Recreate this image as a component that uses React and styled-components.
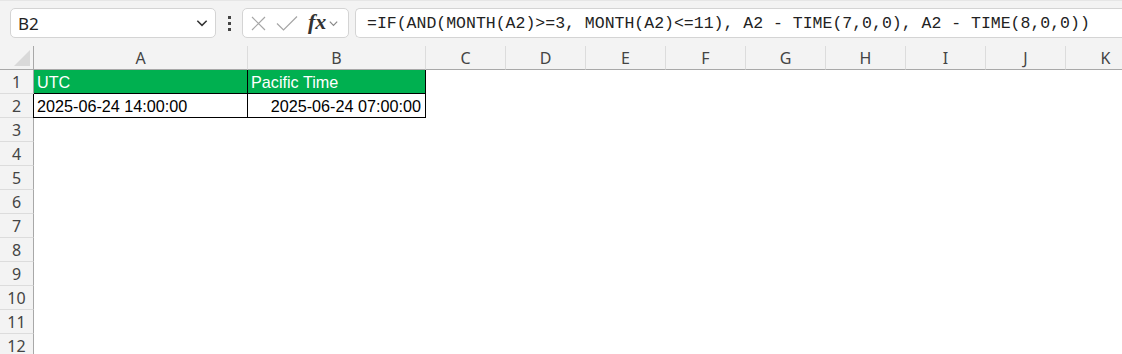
import styled, { createGlobalStyle } from 'styled-components';

const GlobalStyle = createGlobalStyle`
  html, body {
    margin: 0;
    padding: 0;
    background: #f3f3f3;
    overflow: hidden;
  }
`;

const columns = [
  { id: 'A', width: 214 },
  { id: 'B', width: 178 },
  { id: 'C', width: 80 },
  { id: 'D', width: 80 },
  { id: 'E', width: 80 },
  { id: 'F', width: 80 },
  { id: 'G', width: 80 },
  { id: 'H', width: 80 },
  { id: 'I', width: 80 },
  { id: 'J', width: 80 },
  { id: 'K', width: 80 },
];

const rows = [1, 2, 3, 4, 5, 6, 7, 8, 9, 10, 11, 12];

const cells = {
  A1: { text: 'UTC', header: true },
  B1: { text: 'Pacific Time', header: true },
  A2: { text: '2025-06-24 14:00:00', boxed: true },
  B2: { text: '2025-06-24 07:00:00', boxed: true, right: true },
};

const Chevron = ({ size = 12, color = '#444' }) => (
  <svg width={size} height={size} viewBox="0 0 12 12">
    <path d="M2 4 L6 8 L10 4" fill="none" stroke={color} strokeWidth="1.3" />
  </svg>
);

function App() {
  const template = `34px ${columns.map((c) => `${c.width}px`).join(' ')}`;
  return (
    <>
      <GlobalStyle />
      <ScPage>
        <ScToolbar>
          <ScNameBox>
            <span>B2</span>
            <Chevron size={14} color="#333" />
          </ScNameBox>
          <ScDots>
            <i />
            <i />
            <i />
          </ScDots>
          <ScButtonGroup>
            <svg width="17" height="17" viewBox="0 0 17 17">
              <path d="M2 2 L15 15 M15 2 L2 15" stroke="#a6a6a6" strokeWidth="1.2" />
            </svg>
            <svg width="22" height="17" viewBox="0 0 22 17">
              <path d="M1 8.5 L7.5 15 L21 1.5" fill="none" stroke="#a6a6a6" strokeWidth="1.2" />
            </svg>
            <ScFx>
              fx
              <Chevron size={11} color="#888" />
            </ScFx>
          </ScButtonGroup>
          <ScFormula>=IF(AND(MONTH(A2)&gt;=3, MONTH(A2)&lt;=11), A2 - TIME(7,0,0), A2 - TIME(8,0,0))</ScFormula>
        </ScToolbar>

        <ScGrid style={{ gridTemplateColumns: template }}>
          <ScCorner>
            <svg width="18" height="18" viewBox="0 0 18 18">
              <path d="M17 1 L17 17 L1 17 Z" fill="#d9d9d9" />
            </svg>
          </ScCorner>
          {columns.map((c) => (
            <ScColHeader key={c.id}>{c.id}</ScColHeader>
          ))}
          {rows.map((r) => (
            <ScRow key={r}>
              <ScRowHeader>{r}</ScRowHeader>
              {columns.map((c) => {
                const cell = cells[`${c.id}${r}`];
                return (
                  <ScCell
                    key={c.id}
                    $header={cell?.header}
                    $boxed={cell?.boxed}
                    $right={cell?.right}
                    $first={c.id === 'A'}
                  >
                    {cell?.text}
                  </ScCell>
                );
              })}
            </ScRow>
          ))}
        </ScGrid>
      </ScPage>
    </>
  );
}

const ScPage = styled.div`
  width: 1122px;
  height: 354px;
  overflow: hidden;
  background: #f3f3f3;
`;

const ScToolbar = styled.div`
  height: 46px;
  box-sizing: border-box;
  padding: 7px 0 0 10px;
  display: flex;
  align-items: flex-start;
  border-top: 1px solid #e6e6e6;
`;

const ScBox = styled.div`
  height: 30px;
  box-sizing: border-box;
  background: #fff;
  border: 1px solid #d4d4d4;
  border-radius: 5px;
  display: flex;
  align-items: center;
`;

const ScNameBox = styled(ScBox)`
  width: 206px;
  padding: 0 6px 0 7px;
  justify-content: space-between;
  font-family: 'Noto Sans', 'Liberation Sans', sans-serif;
  font-size: 17px;
  color: #222;
`;

const ScDots = styled.div`
  width: 26px;
  height: 30px;
  display: flex;
  flex-direction: column;
  align-items: center;
  justify-content: center;
  gap: 3px;

  i {
    width: 3px;
    height: 3px;
    background: #444;
  }
`;

const ScButtonGroup = styled(ScBox)`
  width: 107px;
  padding: 0 4px 0 7px;
  gap: 9px;
`;

const ScFx = styled.span`
  display: flex;
  align-items: center;
  gap: 2px;
  margin-left: 1px;
  font-family: 'Liberation Serif', 'DejaVu Serif', serif;
  font-style: italic;
  font-weight: bold;
  font-size: 22px;
  color: #333;
  line-height: 1;
  padding-bottom: 2px;

  svg {
    margin-top: 3px;
  }
`;

const ScFormula = styled(ScBox)`
  flex: 1;
  margin-left: 6px;
  padding-left: 11px;
  border-right: none;
  border-radius: 5px 0 0 5px;
  font-family: 'Liberation Mono', 'DejaVu Sans Mono', monospace;
  font-size: 16.5px;
  color: #222;
  white-space: nowrap;
`;

const ScGrid = styled.div`
  display: grid;
  grid-auto-rows: 24px;
`;

const ScRow = styled.div`
  display: contents;
`;

const ScCorner = styled.div`
  background: #f3f3f3;
  border-right: 1px solid #a8a8a8;
  border-bottom: 1px solid #a8a8a8;
  display: flex;
  align-items: flex-end;
  justify-content: flex-end;
  padding: 0 2px 2px 0;
`;

const ScColHeader = styled.div`
  background: #f3f3f3;
  border-right: 1px solid #dcdcdc;
  border-bottom: 1px solid #a8a8a8;
  display: flex;
  align-items: center;
  justify-content: center;
  font-family: 'Noto Sans', 'Liberation Sans', sans-serif;
  font-size: 16px;
  color: #444;
`;

const ScRowHeader = styled.div`
  background: #f3f3f3;
  border-right: 1px solid #a8a8a8;
  border-bottom: 1px solid #dcdcdc;
  display: flex;
  align-items: center;
  justify-content: center;
  font-family: 'Noto Sans', 'Liberation Sans', sans-serif;
  font-size: 16px;
  color: #444;
`;

const ScCell = styled.div`
  box-sizing: border-box;
  background: ${(p) => (p.$header ? '#00b050' : '#fff')};
  color: ${(p) => (p.$header ? '#fff' : '#000')};
  border-right: ${(p) => (p.$header || p.$boxed ? '1px solid #000' : 'none')};
  border-bottom: ${(p) => (p.$header || p.$boxed ? '1px solid #000' : 'none')};
  margin-left: ${(p) => (p.$boxed && p.$first ? '-1px' : '0')};
  border-left: ${(p) => (p.$boxed && p.$first ? '1px solid #000' : 'none')};
  display: flex;
  align-items: center;
  justify-content: ${(p) => (p.$right ? 'flex-end' : 'flex-start')};
  padding: 1px 4px 0 3px;
  font-family: 'Liberation Sans', Arial, sans-serif;
  font-size: 16.2px;
  white-space: nowrap;
  overflow: hidden;
`;

export default App;
